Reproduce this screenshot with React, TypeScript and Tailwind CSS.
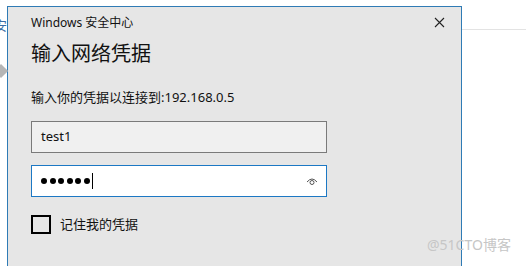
import React from "react";

const font = { fontFamily: '"Noto Sans", "Noto Sans CJK SC", sans-serif' };

const EyeIcon = () => (
  <svg width="12" height="9" viewBox="0 0 12 9" fill="none" stroke="#555" strokeWidth="1">
    <path d="M1 5 Q6 -1 11 5" />
    <circle cx="6" cy="5.5" r="2" />
  </svg>
);

const CloseIcon = () => (
  <svg width="11" height="11" viewBox="0 0 11 11" stroke="#222" strokeWidth="1.1">
    <path d="M1 1 L10 10 M10 1 L1 10" />
  </svg>
);

export default function App() {
  return (
    <div className="relative w-[526px] h-[266px] overflow-hidden bg-white" style={font}>
      {/* background window fragments */}
      <span className="absolute left-[-6px] top-[19px] text-[13px] text-[#3a6ea5] leading-none">安</span>
      <div className="absolute left-[-4px] top-[66px] w-[10px] h-[10px] rotate-45 bg-[#b5b5b5]" />
      <div className="absolute left-[462px] top-[29px] w-[64px] h-px bg-[#e3e3e3]" />

      <div className="ml-[7px] mt-[6px] w-[455px] h-[280px] bg-[#e6e6e6] border border-[#2f7bb5] flex flex-col pl-[23px]">
        <div className="flex items-center justify-between h-[30px] pr-[16px]">
          <span className="text-[12px] text-[#111] pt-[2px]">Windows 安全中心</span>
          <CloseIcon />
        </div>
        <h1 className="text-[20px] text-[#111] leading-[28px] mt-[3px]">输入网络凭据</h1>
        <p className="text-[13px] text-[#111] mt-[20px] leading-[18px]">输入你的凭据以连接到:192.168.0.5</p>

        <div className="mt-[15px] w-[296px] h-[32px] bg-[#f0f0f0] border border-[#7a7a7a] flex items-center pl-[9px] text-[13px] text-[#111]">
          test1
        </div>

        <div className="mt-[12px] w-[296px] h-[32px] bg-white border border-[#1c78c4] flex items-center pl-[9px] pr-[8px]">
          <span className="flex items-center gap-[2.5px]" aria-label="password">
            {[0, 1, 2, 3, 4, 5].map((i) => (
              <span key={i} className="w-[6px] h-[6px] rounded-full bg-black" />
            ))}
          </span>
          <span className="w-px h-[16px] bg-black ml-[2px]" />
          <span className="ml-auto flex items-center">
            <EyeIcon />
          </span>
        </div>

        <label className="mt-[18px] flex items-center gap-[9px]">
          <span className="w-[20px] h-[19px] border-2 border-black" />
          <span className="text-[13px] text-[#111]">记住我的凭据</span>
        </label>
      </div>

      <span className="absolute left-[427px] top-[238px] text-[14px] text-[#c6c6c6] leading-none">@51CTO博客</span>
    </div>
  );
}
